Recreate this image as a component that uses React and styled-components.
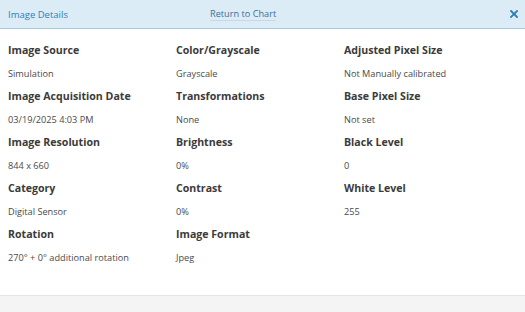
import React from 'react';
import styled, { createGlobalStyle } from 'styled-components';

const GlobalStyle = createGlobalStyle`
  html, body {
    margin: 0;
    padding: 0;
    background: #ffffff;
  }
  body {
    font-family: 'Open Sans', 'Noto Sans', sans-serif;
  }
`;

const StyledPanel = styled.div`
  width: 525px;
  height: 312px;
  display: flex;
  flex-direction: column;
  background: #ffffff;
  overflow: hidden;
`;

const StyledHeader = styled.header`
  height: 28px;
  flex: 0 0 auto;
  display: grid;
  grid-template-columns: 202px 1fr auto;
  align-items: center;
  padding: 0 7px 0 8px;
  background: #dbecf6;
  border-bottom: 1px solid #a9c9dd;

  .title {
    font-size: 9.5px;
    color: #2f7db6;
  }

  .return {
    justify-self: start;
    font-size: 9.2px;
    color: #3d6f96;
    text-decoration: none;
    border-bottom: 1px solid #c6d9e6;
    line-height: 12px;
  }

  .close {
    display: flex;
  }
`;

const StyledBody = styled.div`
  flex: 1;
  display: grid;
  grid-template-columns: repeat(3, 168px);
  grid-auto-rows: 46px;
  align-content: start;
  padding: 14px 0 0 8px;
`;

const StyledField = styled.dl`
  margin: 0;
  display: flex;
  flex-direction: column;

  dt {
    font-size: 10.6px;
    font-weight: 700;
    color: #3b3b3b;
    line-height: 15px;
    height: 23px;
  }

  dd {
    margin: 0;
    font-size: 9.2px;
    color: #4a4a4a;
    line-height: 15px;
  }
`;

const StyledFooter = styled.footer`
  height: 16px;
  flex: 0 0 auto;
  background: #f4f4f4;
  border-top: 1px solid #e6e6e6;
`;

const columns = [
  [
    ['Image Source', 'Simulation'],
    ['Image Acquisition Date', '03/19/2025 4:03 PM'],
    ['Image Resolution', '844 x 660'],
    ['Category', 'Digital Sensor'],
    ['Rotation', '270° + 0° additional rotation'],
  ],
  [
    ['Color/Grayscale', 'Grayscale'],
    ['Transformations', 'None'],
    ['Brightness', '0%'],
    ['Contrast', '0%'],
    ['Image Format', 'Jpeg'],
  ],
  [
    ['Adjusted Pixel Size', 'Not Manually calibrated'],
    ['Base Pixel Size', 'Not set'],
    ['Black Level', '0'],
    ['White Level', '255'],
  ],
];

const App = () => {
  const cells = [];
  for (let row = 0; row < 5; row++) {
    for (let col = 0; col < 3; col++) {
      const item = columns[col][row];
      cells.push(
        item ? (
          <StyledField key={`${row}-${col}`}>
            <dt>{item[0]}</dt>
            <dd>{item[1]}</dd>
          </StyledField>
        ) : (
          <div key={`${row}-${col}`} />
        )
      );
    }
  }

  return (
    <>
      <GlobalStyle />
      <StyledPanel>
        <StyledHeader>
          <span className="title">Image Details</span>
          <a className="return" href="#chart">Return to Chart</a>
          <span className="close">
            <svg width="8" height="8" viewBox="0 0 8 8">
              <path d="M1 1 L7 7 M7 1 L1 7" stroke="#2f7db6" strokeWidth="1.8" strokeLinecap="square" />
            </svg>
          </span>
        </StyledHeader>

        <StyledBody>{cells}</StyledBody>

        <StyledFooter />
      </StyledPanel>
    </>
  );
};

export default App;
